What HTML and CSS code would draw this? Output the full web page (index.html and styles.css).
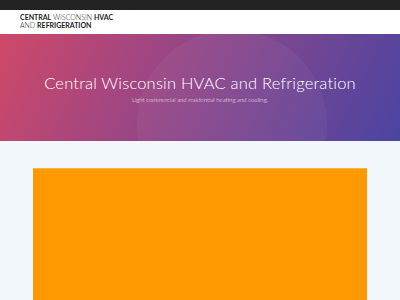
FILE: index.html
```html
<!DOCTYPE html>
<html lang="en">
<head>
    <meta charset="UTF-8">
    <meta name="viewport" content="width=device-width, initial-scale=1.0">
    <title>Central Wisconsin HVAC and Refrigeration</title>
    <link rel="stylesheet" href="styles.css">
</head>
<body>
    <div class="top-bar"></div>

    <header class="site-header">
        <a class="logo" href="#">
            <b>Central</b> Wisconsin <b>HVAC</b><br>
            And <b>Refrigeration</b>
        </a>
    </header>

    <section class="hero">
        <h1>Central Wisconsin HVAC and Refrigeration</h1>
        <p>Light commercial and residential heating and cooling.</p>
    </section>

    <main class="content">
        <div class="feature-box"></div>
    </main>
</body>
</html>
```

FILE: styles.css
```css
* {
    box-sizing: border-box;
}

body {
    margin: 0;
    font-family: "Lato", "Open Sans", sans-serif;
    background: #f2f7fb;
    height: 300px;
    overflow: hidden;
}

.top-bar {
    height: 10px;
    background: #232323;
}

.site-header {
    height: 24px;
    background: #fff;
    padding: 3px 20px 0;
}

.logo {
    display: block;
    color: #222;
    text-decoration: none;
    text-transform: uppercase;
    font-size: 7px;
    line-height: 8px;
    font-weight: 300;
}

.logo b {
    font-weight: 700;
}

.hero {
    height: 107px;
    background:
        radial-gradient(circle at 58% 85%, rgba(255, 255, 255, 0.04) 0 38%, transparent 38.3%),
        linear-gradient(115deg, #cf4868 0%, #a04682 35%, #7c4690 62%, #4b44a2 100%);
    color: #fff;
    text-align: center;
    padding-top: 38px;
}

.hero h1 {
    margin: 0;
    font-size: 16.5px;
    font-weight: 300;
    letter-spacing: 0.2px;
    line-height: 22px;
}

.hero p {
    margin: 2px 0 0;
    font-size: 6px;
    font-weight: 300;
    opacity: 0.9;
}

.content {
    padding: 27px 33px 0;
}

.feature-box {
    height: 132px;
    background: #ff9900;
    border-top: 1px solid #ffb347;
}
```
